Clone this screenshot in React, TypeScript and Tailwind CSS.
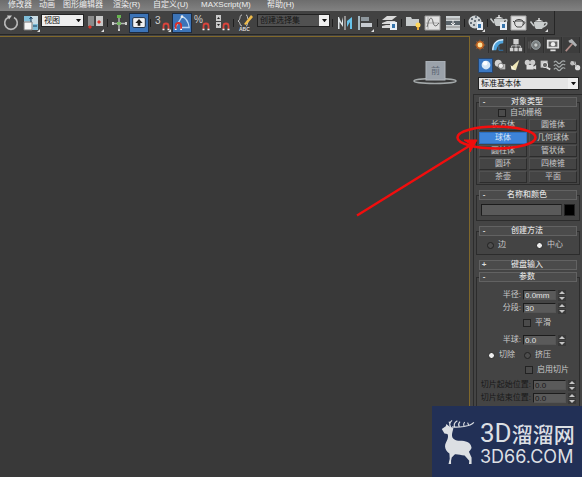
import { useState, type ReactNode } from "react";

const MENUS = [
  { label: "修改器", width: "w-[31px]" },
  { label: "动画", width: "w-6" },
  { label: "图形编辑器", width: "w-[50px]" },
  { label: "渲染(R)", width: "w-10" },
  { label: "自定义(U)", width: "w-12" },
  { label: "MAXScript(M)", width: "w-[66px]" },
  { label: "帮助(H)", width: "w-10" },
];

function Tool({ label, active, children }: { label: string; active?: boolean; children: ReactNode }) {
  return (
    <button
      type="button"
      aria-label={label}
      className={`h-5 w-5 shrink-0 ${active ? "border border-[#1d2b40] bg-[#3c74b8]" : ""}`}
    >
      <svg viewBox="0 0 20 20" className="h-full w-full" fill="none">
        {children}
      </svg>
    </button>
  );
}

function Separator({ wide }: { wide?: boolean }) {
  return (
    <span className={`flex h-4 shrink-0 justify-center ${wide ? "w-[5px]" : "w-[3px]"}`}>
      <span className="my-1 w-px bg-[#1f1f1f]" />
    </span>
  );
}

function Magnet() {
  return (
    <g>
      <path d="M11.500 16v-3a2.500 2.500 0 0 1 5 0v3" stroke="#d8443b" strokeWidth="1.800" />
      <path d="M10.500 16.500h2M15.500 16.500h2" stroke="#eee" strokeWidth="1.500" />
    </g>
  );
}

function Teapot() {
  return (
    <g>
      <path d="M5 9h10c.5 3-.5 5-2 7H7c-1-1-2-3-2-7Z" fill="#c9cdcd" />
      <path d="M6 8.500C7 6.500 13 6.500 14 8.500Z" fill="#e6e8e8" />
      <circle cx="10" cy="6" r="1" fill="#ddd" />
      <path d="M5 13 1.500 8.500M15 10c4-2 4 2-1 4" stroke="#c9cdcd" strokeWidth="1.500" />
    </g>
  );
}

function Corner() {
  return <path d="M19 16v3h-3Z" fill="#ddd" />;
}

function Select({ label, options, className }: { label: string; options: string[]; className: string }) {
  return (
    <div className={`relative shrink-0 ${className}`}>
      <select
        aria-label={label}
        className="block h-full w-full appearance-none border border-[#222] bg-transparent pl-0.5 text-[8px] leading-[10px] outline-none"
      >
        {options.map((o) => (
          <option key={o}>{o}</option>
        ))}
      </select>
      <span className="pointer-events-none absolute inset-y-px right-px flex w-[10px] items-center justify-center bg-[#eee]">
        <svg viewBox="0 0 6 4" className="w-[5px]">
          <path d="M0 0h6L3 4Z" fill="#111" />
        </svg>
      </span>
    </div>
  );
}

function Toolbar() {
  return (
    <div className="flex">
      <div className="flex h-6 items-center border-r border-b border-[#262626] bg-[#424242] pr-[5px] pl-px">
        <Tool label="旋转">
          <path d="M7 4.500a6.300 6.300 0 1 0 6 0" stroke="#b9b9b9" strokeWidth="1.600" />
          <path d="M6 2.500h5l-3 4Z" fill="#ccc" />
        </Tool>
        <Tool label="缩放">
          <path d="M3 3h14v14H3Z" fill="#c9dce5" />
          <path d="M3 3h7v5H3ZM12 11h5v6h-5Z" fill="#7fbdd8" />
          <path d="M3 9h8v8H3Z" fill="#f5f5f5" stroke="#777" />
          <path d="M10 9V4M8.500 6 10 4l1.500 2M12 13h4" stroke="#173a5d" />
          <Corner />
        </Tool>
        <Select label="参考坐标系" options={["视图", "屏幕", "世界"]} className="mb-1 h-[13px] w-[43px] bg-[#eee] text-[#111]" />
        <span className="flex w-[22px] justify-center">
          <Tool label="使用轴点中心">
            <path d="M3 3h6v10H3Z" fill="#8b8b8b" />
            <path d="M11 3h7v10h-7Z" fill="#c9c9c9" />
            <path d="m5 12 2 2-2 2-2-2ZM14 7l2 2-2 2-2-2Z" fill="#df3328" />
            <Corner />
          </Tool>
        </span>
        <Separator />
        <Tool label="选择并操纵">
          <path d="M10 4v13M4 10.500h13" stroke="#b5b9b5" strokeWidth="1.400" />
          <path d="M8 5V2h4v3Z" fill="#67b64f" />
          <path d="M8 9h4v3H8Z" fill="#77b865" />
          <path d="M3 9h2v3H3ZM16 9h2v3h-2ZM9 16h2v2H9Z" fill="#ccc" />
        </Tool>
        <Tool label="键盘快捷键覆盖" active>
          <rect x="3" y="4" width="14" height="11" rx="1.500" fill="#f1f1f1" stroke="#15253a" />
          <path d="M10 5.500 14 10h-2.500v3h-3v-3H6Z" fill="#222" />
        </Tool>
        <Separator />
        <Tool label="捕捉开关">
          <text x="3" y="11" fontSize="10" fill="#d2d2d2">3</text>
          <Magnet />
          <Corner />
        </Tool>
        <Tool label="角度捕捉" active>
          <path d="M2 16 10 3M10 3c4 1 7 6 8 12H8" stroke="#b8d5f4" strokeWidth="1.400" />
          <path d="M3 17v-4a3 3 0 0 1 6 0v4" stroke="#dd3029" strokeWidth="2" />
          <path d="M2 17h2M8 17h2" stroke="#fff" strokeWidth="1.500" />
          <circle cx="10" cy="3" r="1.500" fill="#eee" />
        </Tool>
        <Tool label="百分比捕捉">
          <text x="2" y="10" fontSize="10" fill="#d2d2d2">%</text>
          <Magnet />
        </Tool>
        <Tool label="微调器捕捉">
          <path d="M4 2h5v6H4ZM4 9h5v6H4Z" fill="#c9c9c9" />
          <path d="m5 6 1.500-2L8 6ZM5 11l1.500 2L8 11Z" fill="#222" />
          <Magnet />
        </Tool>
        <Separator />
        <Tool label="编辑命名选择集">
          <path d="M7 2C4 2 6 7 3 8c3 1 1 5 4 5M11 2c2 0 1 3 2 4M11 13c2 0 1-3 2-4" stroke="#c8c8c8" />
          <path d="m9 11 7-9 2 2-7 8Z" fill="#f0bc4b" />
          <text x="4" y="18" fontSize="5" fontWeight="bold" fill="#ddd">ABC</text>
        </Tool>
        <Select label="命名选择集" options={["创建选择集"]} className="mb-1 ml-0.5 h-[13px] w-[73px] bg-[#515151] text-[#161616]" />
        <Separator wide />
        <Tool label="镜像">
          <path d="M3 4v12h1.500V9L8 14V4L6.500 10 4 4Z" fill="#dfe5e7" />
          <path d="M17 4v12h-2V9l-3 5V8Z" fill="#67c3ea" />
          <path d="M10 3v14" stroke="#e2e2e2" />
        </Tool>
        <Tool label="对齐">
          <path d="M4 3v14" stroke="#c5dfed" strokeWidth="1.500" />
          <path d="M6 4h8v4H6Z" fill="#8d969c" />
          <path d="M6 10h11v4H6Z" fill="#c7cbd0" />
          <Corner />
        </Tool>
        <Separator wide />
        <Tool label="层管理器">
          <path d="m2 7 5-4h10l-5 4ZM2 10l5-2h9l-4 3H2ZM2 13l4-1h9l-3 3H2Z" fill="#dadada" />
          <path d="M10 9h7v8h-7Z" fill="#e9eff5" />
          <path d="M12 11h3v4h-3Z" fill="#3574ac" />
        </Tool>
        <Separator />
        <Tool label="功能区">
          <path d="M3 4h5l1 2h7v7H3Z" fill="#c7cbcc" />
          <circle cx="15" cy="12" r="2.500" fill="#ffd75e" />
          <path d="M14 14h2v3h-2Z" fill="#e8a83a" />
        </Tool>
        <Tool label="曲线编辑器">
          <path d="M2 3h15v14H2Z" fill="#e1e1e1" stroke="#999" />
          <path d="M3 10h13M5 4v12" stroke="#aaa" />
          <path d="M4 14C7 2 9 4 10 9s3 5 6 1" stroke="#666" />
        </Tool>
        <Tool label="图解视图">
          <path d="M3 3h14v14H3Z" fill="#cbd0d2" />
          <path d="M3 6h14M3 14h14" stroke="#888" />
          <path d="M3 8h14v4H3Z" fill="#59636a" />
          <path d="M10 7v5M8 10l2 2 2-2" stroke="#eee" />
        </Tool>
        <Separator />
        <Tool label="材质编辑器">
          <circle cx="9" cy="9" r="6.500" fill="#cfd3d5" />
          <path d="M5 5h2v2H5ZM9 3h2v2H9ZM4 9h2v2H4ZM8 7h2v2H8ZM7 11h2v2H7ZM12 6h2v2h-2Z" fill="#68717a" />
          <path d="M11 9h6v8h-6Z" fill="#e8edf4" />
          <path d="M12 11h3v4h-3Z" fill="#3574ac" />
          <Corner />
        </Tool>
        <Separator />
        <Tool label="渲染设置">
          <g transform="translate(0 -3)">
            <Teapot />
          </g>
          <path d="M11 9h7v8h-7Z" fill="#e8edf4" />
          <path d="M13 11h3v4h-3Z" fill="#3574ac" />
        </Tool>
        <Tool label="渲染帧窗口">
          <path d="M2 3h15v14H2Z" fill="#dedede" stroke="#aaa" />
          <path d="M6 8c2-2 6-2 8 0 1 3-1 6-2 6H8c-2-1-3-4-2-6ZM6 10 4 8M14 9c3-1 2 2 0 3M6 8h8" stroke="#444" />
        </Tool>
        <Tool label="渲染产品">
          <Teapot />
          <Corner />
        </Tool>
      </div>
    </div>
  );
}

function Rollout({ title, open = true, grow, children }: { title: string; open?: boolean; grow?: boolean; children?: ReactNode }) {
  return (
    <section className={`flex flex-col px-0.5 ${grow ? "flex-1" : ""}`}>
      <button
        type="button"
        aria-expanded={open}
        className="z-10 mx-[3px] flex h-[10px] items-center border border-[#626262] bg-[#4b4b4b] text-[#dedede]"
      >
        <span className="w-2 text-center font-bold">{open ? "-" : "+"}</span>
        <span className="flex-1 pr-2.5 text-center font-medium">{title}</span>
      </button>
      {open && <div className="-mt-[5px] flex-1 border border-[#2c2c2c] bg-[#444] pt-1">{children}</div>}
    </section>
  );
}

function ObjectButton({ label, active, onClick }: { label: string; active: boolean; onClick: () => void }) {
  return (
    <button
      type="button"
      aria-pressed={active}
      onClick={onClick}
      className={`h-3 border text-center ${
        active
          ? "border-[#2d6fbe] bg-[#3d83d9] text-[#d5e5f7]"
          : "border-t-[#515151] border-r-[#2c2c2c] border-b-[#2c2c2c] border-l-[#515151] bg-[#444] text-[#c8c8c8]"
      }`}
    >
      {label}
    </button>
  );
}

function Radio({ name, label, checked }: { name: string; label: string; checked?: boolean }) {
  return (
    <label className="flex items-center gap-1">
      <input
        type="radio"
        name={name}
        defaultChecked={checked}
        className="h-[7px] w-[7px] appearance-none rounded-full border border-[#222] bg-[#4d4d4d] checked:bg-[#eee]"
      />
      {label}
    </label>
  );
}

function Check({ label }: { label: string }) {
  return (
    <label className="flex h-3 items-center gap-1">
      <input type="checkbox" className="h-2 w-2 appearance-none border border-[#222] bg-[#4b4b4b] checked:bg-[#ddd]" />
      {label}
    </label>
  );
}

function Spinner({ id, label, value, disabled }: { id: string; label: string; value: string; disabled?: boolean }) {
  return (
    <div className={`flex h-3 items-center justify-end gap-0.5 ${disabled ? "pr-[3px] text-[#191919]" : "pr-[13px]"}`}>
      <label htmlFor={id} className="whitespace-nowrap">
        {label}
      </label>
      <input
        id={id}
        defaultValue={value}
        disabled={disabled}
        className={`h-[10px] w-[33px] shrink-0 border border-t-[#1c1c1c] border-r-[#555] border-b-[#555] border-l-[#1c1c1c] bg-[#5a5a5a] pl-px text-[8px] leading-2 ${
          disabled ? "" : "text-[#e2e2e2]"
        }`}
      />
      <span className="flex w-2 shrink-0 flex-col gap-px">
        {["M1 4 4 1l3 3Z", "M1 1h6L4 4Z"].map((d, i) => (
          <button key={d} type="button" aria-label={`${label}${i ? "减小" : "增大"}`} className="h-[5px] w-2 bg-[#383838]">
            <svg viewBox="0 0 8 5" className="h-full w-full">
              <path d={d} fill="#c4c4c4" />
            </svg>
          </button>
        ))}
      </span>
    </div>
  );
}

const TABS: { label: string; icon: ReactNode }[] = [
  {
    label: "创建",
    icon: (
      <>
        <circle cx="8" cy="8" r="4.500" fill="#c9641d" />
        <path d="M8 2v12M2 8h12M4 4l8 8M12 4l-8 8" stroke="#b8672e" />
        <circle cx="8" cy="8" r="2.800" fill="#ffe39b" />
      </>
    ),
  },
  {
    label: "修改",
    icon: (
      <>
        <path d="M2 14C2 7 6 2 14 2v4c-5 0-7 4-8 8Z" fill="#4fa3dc" />
        <path d="M2 14C2 7 6 2 14 2" stroke="#d8efff" strokeWidth="1.500" />
        <path d="M9 9v5h5" stroke="#2e7dbc" />
      </>
    ),
  },
  {
    label: "层次",
    icon: (
      <>
        <path d="M5 1h6v6H5ZM1 11h4v4H1ZM6 11h4v4H6ZM11 11h4v4h-4Z" fill="#cfcfcf" />
        <path d="M8 7v4M3 11V9h10v2" stroke="#cfcfcf" />
      </>
    ),
  },
  {
    label: "运动",
    icon: (
      <>
        <circle cx="9" cy="8" r="5" fill="#7d8587" stroke="#a0a6a8" />
        <circle cx="9" cy="8" r="2.500" fill="#c5caca" stroke="#666" />
        <path d="M1 4v8M3 3v10" stroke="#666" />
      </>
    ),
  },
  {
    label: "显示",
    icon: (
      <>
        <path d="M1 2h14v10H1ZM5 13h6v2H5Z" fill="#dedede" />
        <path d="M3 4h10v6H3Z" fill="#666" />
        <circle cx="8" cy="7" r="2.500" fill="#eee" />
      </>
    ),
  },
  {
    label: "实用程序",
    icon: (
      <>
        <path d="m2 15 8-9" stroke="#b08c88" strokeWidth="2" />
        <path d="m5 3 4-2 6 7-2 2-4-4-3-1Z" fill="#aeb1b3" />
      </>
    ),
  },
];

const CATEGORIES: { label: string; icon: ReactNode }[] = [
  { label: "几何体", icon: <><circle cx="8" cy="8" r="5" fill="#d6e7f6" /><circle cx="7" cy="6" r="2.500" fill="#fff" /></> },
  { label: "图形", icon: <><circle cx="6" cy="6" r="4" fill="#d2d2d2" /><path d="M8 7h6v6H8Z" fill="#bcbcbc" /><circle cx="9" cy="9" r="3" fill="#eee" stroke="#777" /></> },
  { label: "灯光", icon: <><path d="m13 2-9 8 5 4Z" fill="#eee6b7" /><path d="m3 8 6 6-5-1Z" fill="#fffbe0" /></> },
  { label: "摄影机", icon: <><circle cx="5" cy="5" r="3" fill="#ccc" /><circle cx="11" cy="5" r="3" fill="#ccc" /><path d="M4 8h8v5H4Zm8 2 3-2v5l-3-1Z" fill="#ddd" /></> },
  { label: "辅助对象", icon: <><path d="M3 3h8v8H3Z" fill="#c8c8c8" /><circle cx="8" cy="8" r="3" fill="#666" stroke="#eee" /><path d="m10 11 4 2" stroke="#ddd" strokeWidth="2" /></> },
  { label: "空间扭曲", icon: <path d="M1 5q2-3 4 0t4 0 5-1M1 9q2-3 4 0t4 0 5-1M1 13q2-3 4 0t4 0 5-1" stroke="#a5aaaa" strokeWidth="1.300" /> },
  { label: "系统", icon: <><circle cx="5" cy="6" r="2.500" fill="#bbb" /><circle cx="11" cy="11" r="3" fill="#ddd" /><path d="m4 4 8 8M8 4l1 4" stroke="#ccc" /></> },
];

const OBJECTS = ["长方体", "圆锥体", "球体", "几何球体", "圆柱体", "管状体", "圆环", "四棱锥", "茶壶", "平面"];

function CommandPanel() {
  const [object, setObject] = useState("球体");
  return (
    <aside className="relative flex w-28 shrink-0 flex-col bg-[#444] text-[8px] leading-[10px] text-[#c8c8c8]">
      <div className="flex h-[18px] items-center justify-between pr-0.5 pl-0.5">
        {TABS.map((t, i) => (
          <button
            key={t.label}
            type="button"
            aria-label={t.label}
            className={`flex h-4 w-[17px] items-center justify-center border-r border-[#303030] ${i === 0 ? "bg-[#444]" : "bg-[#3d3d3d]"}`}
          >
            <svg viewBox="0 0 16 16" className="h-3.5 w-3.5" fill="none">
              {t.icon}
            </svg>
          </button>
        ))}
      </div>
      <div className="mt-[3px] flex h-4 items-center justify-between pl-2">
        {CATEGORIES.map((c, i) => (
          <button
            key={c.label}
            type="button"
            aria-label={c.label}
            className={`flex h-[15px] w-[15px] items-center justify-center ${i === 0 ? "border border-[#28456b] bg-[#3b78c2]" : ""}`}
          >
            <svg viewBox="0 0 16 16" className="h-3.5 w-3.5 shrink-0" fill="none">
              {c.icon}
            </svg>
          </button>
        ))}
      </div>
      <Select label="子类别" options={["标准基本体", "扩展基本体"]} className="mt-1 mr-[3px] ml-2 h-[13px] bg-[#e4e4e4] text-[#111]" />
      <div className="mt-1 ml-[3px] flex flex-1 flex-col border-t border-l border-[#2c2c2c] pt-0.5">
        <Rollout title="对象类型">
          <div className="flex justify-center pr-4">
            <Check label="自动栅格" />
          </div>
          <div className="grid grid-cols-2 gap-x-0.5 gap-y-px px-0.5 pb-px">
            {OBJECTS.map((o) => (
              <ObjectButton key={o} label={o} active={o === object} onClick={() => setObject(o)} />
            ))}
          </div>
        </Rollout>
        <div className="h-[5px]" />
        <Rollout title="名称和颜色">
          <div className="flex gap-0.5 px-1 py-1">
            <input
              aria-label="名称"
              className="h-3 min-w-0 flex-1 border border-t-[#1c1c1c] border-r-[#333] border-b-[#333] border-l-[#1c1c1c] bg-[#5a5a5a] text-[8px]"
            />
            <button type="button" aria-label="颜色" className="h-3 w-[11px] border border-[#222] bg-black" />
          </div>
        </Rollout>
        <div className="h-[5px]" />
        <Rollout title="创建方法">
          <div className="flex h-[18px] items-center gap-[30px] pl-2.5">
            <Radio name="method" label="边" />
            <Radio name="method" label="中心" checked />
          </div>
        </Rollout>
        <div className="h-[5px]" />
        <Rollout title="键盘输入" open={false} />
        <div className="h-0.5" />
        <Rollout title="参数" grow>
          <div className="flex flex-col gap-[3px] pt-[7px]">
            <div className="flex flex-col gap-px">
              <Spinner id="radius" label="半径:" value="0.0mm" />
              <Spinner id="segments" label="分段:" value="30" />
            </div>
            <div className="pb-0.5 pl-[46px]">
              <Check label="平滑" />
            </div>
            <Spinner id="hemisphere" label="半球:" value="0.0" />
            <div className="flex h-3 items-center gap-[9px] pl-[11px]">
              <Radio name="cut" label="切除" checked />
              <Radio name="cut" label="挤压" />
            </div>
            <div className="pl-12">
              <Check label="启用切片" />
            </div>
            <div className="flex flex-col gap-px">
              <Spinner id="slice-from" label="切片起始位置:" value="0.0" disabled />
              <Spinner id="slice-to" label="切片结束位置:" value="0.0" disabled />
            </div>
          </div>
        </Rollout>
      </div>
      <svg
        viewBox="350 110 232 110"
        className="pointer-events-none absolute top-[74px] right-0 z-20 h-[110px] w-[232px]"
        fill="none"
        stroke="#f20d0d"
        aria-hidden="true"
      >
        <ellipse cx="496.500" cy="137.500" rx="39" ry="11" strokeWidth="2.600" />
        <path d="M357 215.500 474 143" strokeWidth="2.400" />
        <path d="m477 140-13 0 6 4 0 8Z" fill="#f20d0d" />
      </svg>
    </aside>
  );
}

function Brand() {
  return (
    <div className="absolute right-0 bottom-0 z-30 flex h-[71px] w-[150px] items-center gap-[5px] bg-[#223056] pl-[9px] text-[#dcdfe3]">
      <svg viewBox="55 58 102 136" className="h-[45px] w-[34px] shrink-0" fill="none" aria-hidden="true">
        <path
          d="m57 88 12-8 2-7 7 6 14 6c-1 8-5 15-4 24 2 13 15 14 30 15 17 1 28 8 29 22l-3 5-5 6 8 17v22h-8l1-12-14-16c-12 0-20-4-30-3l-9 9-2 10v12h-8l4-18-1-16c-12-8-17-20-10-34 5-9 8-19 4-25l-9-1Z"
          fill="#dcdfe3"
        />
        <path
          d="M84 82c-6-8-2-15 4-20M82 74l-3-8M88 82c20 2 54-1 66-14M96 82c-4-8 0-14 8-19M110 81c-4-6-2-11 2-15M124 79c-3-5-1-8 2-12M138 76l-3-7"
          stroke="#dcdfe3"
          strokeWidth="3.500"
        />
      </svg>
      <div className="whitespace-nowrap">
        <p className="text-[21px] leading-7 font-medium">
          <span className="font-['Roboto',sans-serif] text-[26px] font-normal">3D</span>溜溜网
        </p>
        <p className="font-['Inter',sans-serif] text-[18px] leading-4 font-normal">3D66.COM</p>
      </div>
    </div>
  );
}

export default function App() {
  return (
    <div className="relative flex min-h-screen flex-col overflow-hidden bg-[#424242] font-['Liberation_Sans','Noto_Sans_CJK_SC',sans-serif]">
      <nav className="flex h-[11px] bg-linear-to-b from-[#6d6d6d] to-[#828282] pl-2 text-[8px] leading-[9px] text-[#eee]">
        {MENUS.map((m) => (
          <button key={m.label} type="button" className={`h-[9px] text-left whitespace-nowrap ${m.width}`}>
            {m.label}
          </button>
        ))}
      </nav>
      <Toolbar />
      <main className="mt-px flex flex-1">
        <div className="flex flex-1 items-start justify-end border-t border-r border-[#80682b] bg-[#393939] pt-6 pr-3">
          <svg viewBox="0 0 44 24" className="w-11" fill="none" role="img" aria-label="视图导航">
            <ellipse cx="22" cy="20" rx="21" ry="2.500" stroke="#a4a9aa" strokeWidth="1.600" />
            <rect x="13" y="0" width="19" height="19" fill="#9ba2aa" stroke="#b0b5bb" />
            <text x="22.500" y="13" fontSize="9" textAnchor="middle" fill="#5c6674">前</text>
          </svg>
        </div>
        <CommandPanel />
      </main>
      <Brand />
    </div>
  );
}
